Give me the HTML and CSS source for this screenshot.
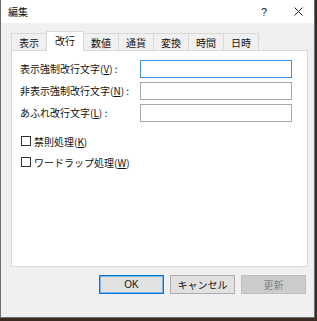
FILE: index.html
```html
<!DOCTYPE html>
<html lang="ja">
<head>
<meta charset="utf-8">
<link rel="stylesheet" href="styles.css">
</head>
<body>
<div class="window">
  <div class="titlebar">
    <span class="title">編集</span>
    <span class="help">?</span>
    <span class="close"><svg width="9" height="9" viewBox="0 0 9 9"><path d="M0.5 0.5L8.5 8.5M8.5 0.5L0.5 8.5" stroke="#222" stroke-width="1" fill="none"/></svg></span>
  </div>
  <div class="body">
    <div class="tabs">
      <div class="tab">表示</div>
      <div class="tab selected">改行</div>
      <div class="tab">数値</div>
      <div class="tab">通貨</div>
      <div class="tab">変換</div>
      <div class="tab">時間</div>
      <div class="tab">日時</div>
    </div>
    <div class="panel">
      <div class="fields">
        <label class="label">表示強制改行文字(<u>V</u>) :</label>
        <div class="input focused"></div>
        <label class="label">非表示強制改行文字(<u>N</u>) :</label>
        <div class="input"></div>
        <label class="label">あふれ改行文字(<u>L</u>) :</label>
        <div class="input"></div>
      </div>
      <div class="checks">
        <div class="check"><span class="box"></span><span>禁則処理(<u>K</u>)</span></div>
        <div class="check"><span class="box"></span><span>ワードラップ処理(<u>W</u>)</span></div>
      </div>
    </div>
    <div class="buttons">
      <div class="btn default">OK</div>
      <div class="btn">キャンセル</div>
      <div class="btn disabled">更新</div>
    </div>
  </div>
</div>
</body>
</html>
```
FILE: styles.css
```css
html, body {
  margin: 0;
  padding: 0;
  background: #3b2b22;
}
.window {
  width: 313px;
  height: 317px;
  border: 1px solid #6e6e6e;
  border-top: 0;
  background: #f0f0f0;
  font-family: "Noto Sans CJK JP", "Noto Sans", sans-serif;
  font-size: 10px;
  color: #111;
  display: flex;
  flex-direction: column;
}
.titlebar {
  height: 23px;
  background: #fff;
  display: flex;
  align-items: center;
  padding-left: 7px;
  flex-shrink: 0;
}
.title {
  line-height: 12px;
}
.help {
  margin-left: auto;
  font-family: "Liberation Sans", sans-serif;
  font-size: 11px;
  line-height: 12px;
  color: #222;
}
.close {
  display: flex;
  margin-left: 27px;
  margin-right: 11px;
}
.body {
  padding: 8px 6px 0 10px;
  display: flex;
  flex-direction: column;
}
.tabs {
  display: flex;
  align-items: flex-end;
  height: 19px;
}
.tab {
  height: 16px;
  padding: 0 7px;
  border: 1px solid #d9d9d9;
  border-bottom: 0;
  background: #f0f0f0;
  line-height: 17px;
  margin-left: -1px;
}
.tab:first-child {
  margin-left: 0;
}
.tab.selected {
  height: 19px;
  padding: 0 8px;
  margin-left: -1px;
  margin-right: -1px;
  margin-bottom: -1px;
  background: #fff;
  line-height: 18px;
  position: relative;
  z-index: 1;
}
.tab.selected + .tab {
  margin-left: 0;
}
.panel {
  box-sizing: border-box;
  height: 217px;
  border: 1px solid #d9d9d9;
  background: #fff;
  padding: 9px 0 0 8px;
}
.fields {
  display: grid;
  grid-template-columns: 120px 152px;
  grid-auto-rows: 18px;
  row-gap: 4px;
  align-items: center;
}
.label {
  line-height: 14px;
  white-space: nowrap;
}
.input {
  box-sizing: border-box;
  height: 18px;
  border: 1px solid #a8a8a8;
  background: #fff;
}
.input.focused {
  border-color: #3f8fdb;
}
.checks {
  margin-top: 12px;
  display: flex;
  flex-direction: column;
  row-gap: 7px;
}
.check {
  display: flex;
  align-items: center;
  height: 14px;
  gap: 3px;
  padding-left: 1px;
}
.box {
  box-sizing: border-box;
  width: 10px;
  height: 10px;
  border: 1px solid #333;
  background: #fff;
}
.buttons {
  display: flex;
  justify-content: flex-end;
  gap: 6px;
  margin-top: 8px;
  margin-right: 2px;
}
.btn {
  box-sizing: border-box;
  width: 65px;
  height: 19px;
  border: 1px solid #adadad;
  background: #e1e1e1;
  display: flex;
  align-items: center;
  justify-content: center;
  line-height: 12px;
}
.btn.default {
  border-color: #0078d7;
  box-shadow: inset 0 0 0 1px #7ab4e6;
  font-family: "Liberation Sans", sans-serif;
}
.btn.disabled {
  background: #cccccc;
  border-color: #bfbfbf;
  color: #838383;
}
```
